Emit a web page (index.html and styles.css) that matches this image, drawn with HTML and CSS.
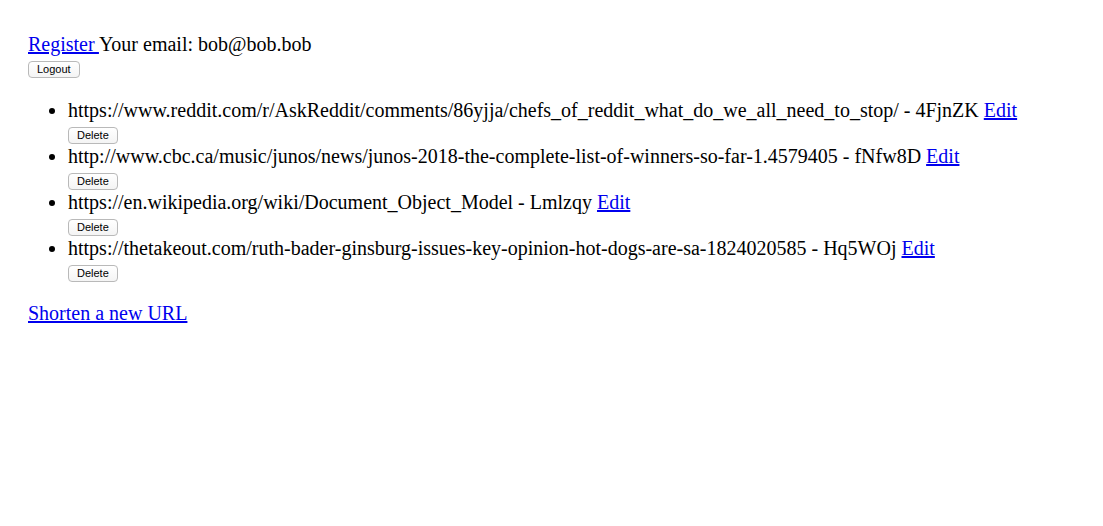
FILE: index.html
```html
<!DOCTYPE html>
<html>
<head>
<meta charset="utf-8">
<title>URLs</title>
<link rel="stylesheet" href="styles.css">
</head>
<body>
<div class="page">
  <header class="top">
    <div class="line"><a href="#">Register </a>Your email: bob@bob.bob</div>
    <button class="btn">Logout</button>
  </header>
  <ul class="urls">
    <li>
      <div class="line">https://www.reddit.com/r/AskReddit/comments/86yjja/chefs_of_reddit_what_do_we_all_need_to_stop/ - 4FjnZK <a href="#">Edit</a></div>
      <button class="btn">Delete</button>
    </li>
    <li>
      <div class="line">http://www.cbc.ca/music/junos/news/junos-2018-the-complete-list-of-winners-so-far-1.4579405 - fNfw8D <a href="#">Edit</a></div>
      <button class="btn">Delete</button>
    </li>
    <li>
      <div class="line">https://en.wikipedia.org/wiki/Document_Object_Model - Lmlzqy <a href="#">Edit</a></div>
      <button class="btn">Delete</button>
    </li>
    <li>
      <div class="line">https://thetakeout.com/ruth-bader-ginsburg-issues-key-opinion-hot-dogs-are-sa-1824020585 - Hq5WOj <a href="#">Edit</a></div>
      <button class="btn">Delete</button>
    </li>
  </ul>
  <div class="line"><a href="#">Shorten a new URL</a></div>
</div>
</body>
</html>
```
FILE: styles.css
```css
html, body {
  margin: 0;
  padding: 0;
  background: #fff;
}
.page {
  padding: 34px 28px;
  font-family: "Liberation Serif", "Times New Roman", serif;
  font-size: 20px;
  line-height: 21px;
  color: #000;
}
.line {
  line-height: 21px;
  white-space: nowrap;
}
a {
  color: #0000ee;
  text-decoration: underline;
}
.btn {
  display: block;
  box-sizing: border-box;
  height: 17px;
  padding: 0 8px;
  margin: 6px 0 2px;
  font-family: "Liberation Sans", Arial, sans-serif;
  font-size: 11px;
  line-height: 15px;
  color: #000;
  background: linear-gradient(#ffffff, #f4f4f4);
  border: 1px solid #b9b9b9;
  border-radius: 4px;
}
.top .btn {
  margin: 6px 0 0;
}
.urls {
  margin: 22px 0 21px;
  padding-left: 40px;
  list-style: disc;
}
```
